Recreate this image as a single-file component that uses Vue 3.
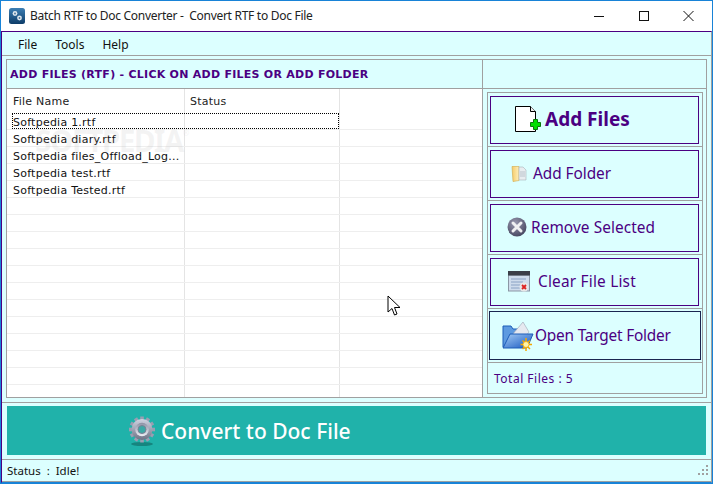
<script setup>
const files = ['Softpedia 1.rtf', 'Softpedia diary.rtf', 'Softpedia files_Offload_Log...', 'Softpedia test.rtf', 'Softpedia Tested.rtf']
const rows = Array.from({ length: 17 }, (_, i) => files[i] || '')
const gearTeeth = Array.from({ length: 12 }, (_, i) => i * 30)
</script>

<template>
  <div class="window">
    <header class="titlebar">
      <svg class="appicon" width="16" height="16" viewBox="0 0 16 16">
        <defs><linearGradient id="ai" x1="0" y1="0" x2="0" y2="1"><stop offset="0" stop-color="#3d7fb4"/><stop offset="1" stop-color="#0d3c68"/></linearGradient></defs>
        <rect width="16" height="16" rx="2.5" fill="url(#ai)"/>
        <circle cx="6" cy="5.5" r="2.4" fill="#dfe8ee"/><circle cx="10.5" cy="10" r="2.4" fill="#dfe8ee"/><circle cx="6" cy="5.5" r="0.9" fill="#47729a"/><circle cx="10.5" cy="10" r="0.9" fill="#47729a"/>
      </svg>
      <span class="title">Batch RTF to Doc Converter -&nbsp; Convert RTF to Doc File</span>
      <div class="winbtns">
        <svg width="12" height="12" viewBox="0 0 12 12"><path d="M1 5.500h10" stroke="#111" fill="none"/></svg>
        <svg width="12" height="12" viewBox="0 0 12 12"><rect x="1.500" y=".5" width="9" height="9" stroke="#111" fill="none"/></svg>
        <svg width="12" height="12" viewBox="0 0 12 12"><path d="M.5 0l10 10M10.500 0L.5 10" stroke="#111" fill="none"/></svg>
      </div>
    </header>
    <div class="frame">
      <nav class="menu"><span>File</span><span>Tools</span><span>Help</span></nav>
      <main class="main">
        <div class="top">
          <h1 class="heading">ADD FILES (RTF) - CLICK ON ADD FILES OR ADD FOLDER</h1>
          <div class="topright"></div>
        </div>
        <div class="content">
          <section class="list">
            <div class="row head"><div class="c1">File Name</div><div class="c2">Status</div><div class="c3"></div></div>
            <div v-for="(r, i) in rows" :key="i" class="row">
              <div class="c1">{{ r }}</div><div class="c2"></div><div class="c3"></div>
              <div v-if="i === 0" class="focus"></div>
            </div>
            <div class="wm">SOFTPEDIA<sup>®</sup></div>
          </section>
          <aside class="side">
            <div class="cell">
              <button class="btn big">
                <svg width="27" height="26" viewBox="0 0 27 26">
                  <path d="M.5.5h15l5 5v20H.5z" fill="#fff" stroke="#000"/>
                  <path d="M15.500.5v5h5" fill="#eee" stroke="#000"/>
                  <path d="M18.500 13.500h4v3h3v4h-3v3h-4v-3h-3v-4h3z" fill="#00e000" stroke="#087a08"/>
                </svg>
                <span>Add Files</span>
              </button>
            </div>
            <div class="cell">
              <button class="btn b2">
                <svg width="16" height="17" viewBox="0 0 16 17">
                  <defs><linearGradient id="fo" x1="0" y1="0" x2="1" y2="0"><stop offset="0" stop-color="#f5cb69"/><stop offset="1" stop-color="#fff0bb"/></linearGradient></defs>
                  <path d="M1 1.500h7v14l-6 1z" fill="url(#fo)" stroke="#d2a848" stroke-width=".6"/>
                  <path d="M8 2h4l3 3v10H8z" fill="#e8edf0" stroke="#aab2b8" stroke-width=".6"/>
                  <path d="M9 7h5M9 9h5M9 11h5" stroke="#a8b2bc" stroke-width=".7"/>
                </svg>
                <span>Add Folder</span>
              </button>
            </div>
            <div class="cell">
              <button class="btn b3">
                <svg width="20" height="20" viewBox="0 0 20 20">
                  <defs><radialGradient id="rm" cx=".4" cy=".3" r=".8"><stop offset="0" stop-color="#9a9ab0"/><stop offset="1" stop-color="#3e3e58"/></radialGradient></defs>
                  <circle cx="10" cy="10" r="9.500" fill="url(#rm)"/>
                  <path d="M6 6l8 8M14 6l-8 8" stroke="#f0f0f2" stroke-width="3" stroke-linecap="round"/>
                </svg>
                <span>Remove Selected</span>
              </button>
            </div>
            <div class="cell">
              <button class="btn b4">
                <svg width="22" height="21" viewBox="0 0 22 21">
                  <rect x=".5" y="4" width="21" height="16" fill="#cfdcec" stroke="#8b97a5"/>
                  <rect x="0" y="0" width="22" height="4.500" fill="#3b3f48"/>
                  <path d="M3 8h15M3 11h12M3 14h10M3 17h10" stroke="#8aa2c4"/>
                  <circle cx="16" cy="16" r="4.500" fill="#e8e8e8"/>
                  <path d="M14 14l4 4M18 14l-4 4" stroke="#d22" stroke-width="1.800"/>
                </svg>
                <span>Clear File List</span>
              </button>
            </div>
            <div class="cell tall">
              <button class="btn b5">
                <svg width="32" height="30" viewBox="0 0 32 30">
                  <defs><linearGradient id="of" x1="0" y1="0" x2="1" y2="1"><stop offset="0" stop-color="#a5cdf5"/><stop offset="1" stop-color="#1556c0"/></linearGradient></defs>
                  <path d="M1 5h8l2 3h8v18H1z" fill="#5d9ae0" stroke="#1d5cb8"/>
                  <path d="M10 14L21 1l6 10-6 8z" fill="#e6e9f0" stroke="#9aa4b4" stroke-width=".6"/>
                  <path d="M1 27L8 13h23l-6 14z" fill="url(#of)" stroke="#1d5cb8"/>
                  <path d="M24 17v4M24 26v4M18.500 23.500h4M26 23.500h4M20.500 19.500l3 3M28 19.500l-3 3M20.500 28l3-3M28 28l-3-3" stroke="#f5a800" stroke-width="1.500"/>
                  <circle cx="24" cy="23.500" r="3" fill="#fff3a8" stroke="#f5a800" stroke-width=".8"/>
                </svg>
                <span>Open Target Folder</span>
              </button>
            </div>
            <div class="total">Total Files : 5</div>
          </aside>
        </div>
      </main>
      <div class="convertbar">
        <button class="convert">
          <svg width="30" height="32" viewBox="0 0 30 32">
            <defs>
              <linearGradient id="ge" x1="0" y1="0" x2="0" y2="1"><stop offset="0" stop-color="#d0d4e2"/><stop offset="1" stop-color="#6d7285"/></linearGradient>
              <linearGradient id="gr" x1="0" y1="0" x2="0" y2="1"><stop offset="0" stop-color="#8c90a4"/><stop offset="1" stop-color="#eef0f6"/></linearGradient>
            </defs>
            <ellipse cx="15" cy="29" rx="11" ry="2" fill="#16857f"/>
            <rect v-for="a in gearTeeth" :key="a" x="13.200" y="1.500" width="3.600" height="5" fill="#9a9eb2" :transform="`rotate(${a} 15 14.500)`"/>
            <circle cx="15" cy="14.500" r="10.500" fill="url(#ge)"/>
            <circle cx="15" cy="14.500" r="6.800" fill="url(#gr)"/>
            <circle cx="15" cy="14.500" r="4" fill="#3ba9a6" stroke="#7c8095"/>
          </svg>
          <span>Convert to Doc File</span>
        </button>
      </div>
      <footer class="status">
        <span>Status&nbsp; :&nbsp; Idle!</span>
        <svg width="11" height="11" viewBox="0 0 11 11" fill="#a0a0a0"><rect x="8" y="0" width="2" height="2"/><rect x="4" y="4" width="2" height="2"/><rect x="8" y="4" width="2" height="2"/><rect x="0" y="8" width="2" height="2"/><rect x="4" y="8" width="2" height="2"/><rect x="8" y="8" width="2" height="2"/></svg>
      </footer>
    </div>
    <svg class="cursor" width="14" height="22" viewBox="0 0 14 22">
      <path d="M1 1v16l4-3.500 2.500 6.500 2.500-1-2.500-6.500H13z" fill="#fff" stroke="#000"/>
    </svg>
  </div>
</template>

<style>
html, body { margin: 0; padding: 0; }
</style>

<style scoped>
.window {
  position: relative; width: 713px; height: 484px; box-sizing: border-box; overflow: hidden;
  border: 1px solid #1883d7; background: #fff;
  display: flex; flex-direction: column;
  font-family: "DejaVu Sans", sans-serif; font-size: 11px; color: #000;
}
.titlebar { height: 30px; flex: none; display: flex; align-items: center; padding: 0 0 1px 8px; box-sizing: border-box; }
.appicon { flex: none; margin-right: 5px; }
.title { font: 12px "Noto Sans", sans-serif; letter-spacing: -.28px; color: #222; white-space: nowrap; }
.winbtns { margin-left: auto; display: flex; gap: 33px; padding: 2px 17px 0 0; }
.frame {
  flex: 1; min-height: 0; display: flex; flex-direction: column; background: #dcffff;
  border-top: 1px solid #4b0082; border-left: 1px solid #4b0082; border-right: 1px solid #a0a0a0; border-bottom: 1px solid #1883d7;
}
.menu {
  height: 24px; box-sizing: border-box; flex: none; display: flex; align-items: center; padding: 1px 0 0 16px; gap: 18px;
  font: 12px "Noto Sans", sans-serif; color: #111; border-bottom: 1px solid #a0a0a0;
}
.main { margin: 3px 4px 0 4px; height: 339px; flex: none; display: flex; flex-direction: column; border: 1px solid #a0a0a0; box-sizing: border-box; }
.top { height: 29px; box-sizing: border-box; flex: none; display: flex; border-bottom: 1px solid #a0a0a0; }
.heading { flex: 0 0 476px; margin: 0; padding: 1px 0 0 3px; box-sizing: border-box; border-right: 1px solid #a0a0a0; font: bold 11px/27px "DejaVu Sans", sans-serif; letter-spacing: .26px; color: #4b0082; white-space: nowrap; overflow: hidden; }
.topright { flex: 1; }
.content { flex: 1; display: flex; min-height: 0; }
.list { position: relative; flex: 0 0 476px; box-sizing: border-box; background: #fff; border-right: 1px solid #a0a0a0; overflow: hidden; }
.row { position: relative; display: flex; flex: none; height: 17px; border-bottom: 1px solid #eeeeee; box-sizing: border-box; color: #111; white-space: nowrap; line-height: 20px; letter-spacing: .24px; }
.row.head { height: 24px; line-height: 26px; border-bottom: 0; color: #222; }
.c1 { flex: 0 0 178px; padding-left: 6px; box-sizing: border-box; border-right: 1px solid #e4e4e4; overflow: hidden; }
.c2 { flex: 0 0 155px; padding-left: 5px; box-sizing: border-box; border-right: 1px solid #e4e4e4; }
.c3 { flex: 1; }
.focus { position: absolute; left: 5px; top: 0; width: 327px; height: 16px; box-sizing: border-box; border: 1px dotted #000; }
.wm { position: absolute; left: 28px; top: 37px; font: bold 30px/30px "Noto Sans", sans-serif; color: rgba(160, 160, 160, .12); letter-spacing: -1.8px; white-space: nowrap; }
.wm sup { font-size: 8px; vertical-align: 16px; line-height: 0; }
.side { flex: 1; margin: 3px 3px 3px 4px; border: 1px solid #a0a0a0; display: flex; flex-direction: column; min-width: 0; }
.cell { height: 54px; flex: none; box-sizing: border-box; border-bottom: 1px solid #a0a0a0; padding: 3px 3px 2px 2px; }
.cell.tall { padding: 2px 1px; }
.btn {
  width: 100%; height: 100%; box-sizing: border-box; margin: 0; background: #dcffff; border: 1px solid #4b0082;
  display: flex; align-items: center; color: #4b0082; font: 15.4px "Noto Sans", sans-serif; padding: 0 0 2px; white-space: nowrap;
}
.btn svg { flex: none; }
.big { font-size: 19px; font-weight: 700; padding-left: 24px; gap: 3px; }
.b2 { padding-left: 20px; gap: 6px; letter-spacing: -.05px; }
.b3 { padding-left: 16px; gap: 4px; letter-spacing: .07px; }
.b4 { padding-left: 17px; gap: 8px; letter-spacing: .2px; }
.b5 { padding: 0 0 0 12px; gap: 1px; letter-spacing: -.2px; border-color: #1a2550; }
.total { flex: 1; display: flex; align-items: center; padding-left: 6px; font: 12px "Noto Sans", sans-serif; letter-spacing: .5px; color: #4b0082; }
.convertbar { margin-top: 4px; flex: none; padding: 3px 5px 0 5px; border-top: 1px solid #a0a0a0; }
.convert {
  width: 100%; height: 49px; background: #20b2aa; border: 0; padding: 0 0 0 120px;
  display: flex; align-items: center; gap: 4px; color: #fff; font: 500 21px "Noto Sans", sans-serif;
}
.status {
  flex: 1; margin-top: 4px; display: flex; align-items: center; justify-content: space-between; padding: 0 2px 0 5px;
  border-top: 1px solid #a0a0a0; border-bottom: 1px solid #a0a0a0; font: 11.5px "Noto Sans", sans-serif; color: #111;
}
.cursor { position: absolute; left: 386px; top: 294px; }
</style>
